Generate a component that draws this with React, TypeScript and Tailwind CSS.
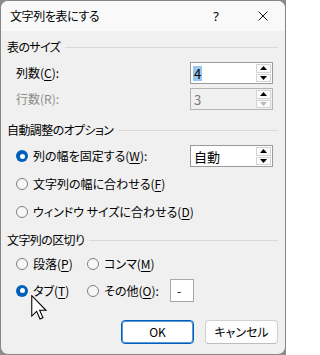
import React from "react";

const font = { fontFamily: '"Noto Sans CJK JP", "Noto Sans", sans-serif', fontFeatureSettings: '"palt"' } as React.CSSProperties;

function U({ c }: { c: string }) {
  return <span className="underline underline-offset-[2px] decoration-[1px]">{c}</span>;
}

function GroupHeader({ label }: { label: string }) {
  return (
    <div className="flex items-center h-[18px] pl-[6px] pr-[7px]">
      <span className="text-[12px] leading-[18px] text-[#000] tracking-[-0.6px]">{label}</span>
      <div className="flex-1 h-px bg-[#d9d9d9] ml-[5px] mt-[1px]" />
    </div>
  );
}

function Tri({ up, dim }: { up?: boolean; dim?: boolean }) {
  return (
    <svg width="7" height="4" viewBox="0 0 7 4">
      {up ? (
        <polygon points="0,4 7,4 3.5,0" fill={dim ? "#b0b0b0" : "#000"} />
      ) : (
        <polygon points="0,0 7,0 3.5,4" fill={dim ? "#b8b8b8" : "#000"} />
      )}
    </svg>
  );
}

function SpinBox({ value, disabled, selected }: { value: string; disabled?: boolean; selected?: boolean }) {
  return (
    <div
      className={`w-[83px] h-[22px] border flex items-stretch ${
        disabled ? "border-[#b4b4b4] bg-[#f0f0f0]" : "border-[#9a9a9a] bg-white"
      }`}
    >
      <div className="flex-1 flex items-center pl-[2px]">
        <span
          className={`text-[13px] leading-[15px] px-px ${
            selected ? "bg-[#99c6ee] text-[#000]" : disabled ? "text-[#7a7a7a]" : "text-[#000]"
          }`}
        >
          {value}
        </span>
      </div>
      <div className="w-[16px] flex flex-col gap-[1px] py-[1px] pr-[1px]">
        <div className="flex-1 border border-[#d4d4d4] bg-[#fbfbfb] flex items-center justify-center">
          <Tri up />
        </div>
        <div className="flex-1 border border-[#d4d4d4] bg-[#fbfbfb] flex items-center justify-center">
          <Tri dim={disabled} />
        </div>
      </div>
    </div>
  );
}

function Radio({ checked }: { checked?: boolean }) {
  return checked ? (
    <div className="w-[12px] h-[12px] rounded-full bg-[#005fb8] flex items-center justify-center shrink-0">
      <div className="w-[5px] h-[5px] rounded-full bg-white" />
    </div>
  ) : (
    <div className="w-[12px] h-[12px] rounded-full border border-[#7f7f7f] bg-[#f7f7f7] shrink-0" />
  );
}

function RadioLabel({ checked, children }: { checked?: boolean; children: React.ReactNode }) {
  return (
    <div className="flex items-center">
      <Radio checked={checked} />
      <span className="ml-[1px] text-[12px] leading-[18px] text-[#000] whitespace-nowrap pl-[4px]">{children}</span>
    </div>
  );
}

export default function App() {
  return (
    <div className="relative w-[286px] h-[355px] bg-[#8c8c8c]" style={font}>
      <div className="w-full h-full rounded-[8px] border border-[#858585] overflow-hidden flex flex-col bg-[#f0f0f0]">
        {/* Title bar */}
        <div className="h-[30px] bg-[#f9f9f9] flex items-center pl-[9px] shrink-0">
          <span className="text-[12px] leading-[18px] text-[#000] tracking-[-0.4px]">文字列を表にする</span>
          <div className="flex-1" />
          <span className="text-[13px] leading-[18px] text-[#000] mr-[39px]" style={{ fontFamily: '"Noto Sans", sans-serif' }}>?</span>
          <svg width="10" height="10" viewBox="0 0 10 10" className="mr-[17px]">
            <path d="M0.5 0.5 L9.5 9.5 M9.5 0.5 L0.5 9.5" stroke="#1a1a1a" strokeWidth="1" />
          </svg>
        </div>

        {/* Body */}
        <div className="flex flex-col pt-[7px]">
          <GroupHeader label="表のサイズ" />
          <div className="flex items-center justify-between pl-[15px] pr-[12px] mt-[6px]">
            <span className="text-[12px] leading-[18px] text-[#000]">
              列数(<U c="C" />):
            </span>
            <SpinBox value="4" selected />
          </div>
          <div className="flex items-center justify-between pl-[15px] pr-[12px] mt-[4px]">
            <span className="text-[12px] leading-[18px] text-[#8c8c8c]">行数(R):</span>
            <SpinBox value="3" disabled />
          </div>

          <div className="mt-[11px]">
            <GroupHeader label="自動調整のオプション" />
          </div>
          <div className="flex items-center justify-between pl-[15px] pr-[12px] mt-[6px] h-[22px]">
            <RadioLabel checked>
              列の幅を固定する(<U c="W" />):
            </RadioLabel>
            <SpinBox value="自動" />
          </div>
          <div className="flex items-center pl-[15px] mt-[6px] h-[22px]">
            <RadioLabel>
              文字列の幅に合わせる(<U c="F" />)
            </RadioLabel>
          </div>
          <div className="flex items-center pl-[15px] mt-[6px] h-[22px]">
            <RadioLabel>
              ウィンドウ サイズに合わせる(<U c="D" />)
            </RadioLabel>
          </div>

          <div className="mt-[8px]">
            <GroupHeader label="文字列の区切り" />
          </div>
          <div className="flex items-center pl-[15px] mt-[4px] h-[22px]">
            <div className="w-[71px]">
              <RadioLabel>
                段落(<U c="P" />)
              </RadioLabel>
            </div>
            <RadioLabel>
              コンマ(<U c="M" />)
            </RadioLabel>
          </div>
          <div className="flex items-center pl-[15px] mt-[4px] h-[23px]">
            <div className="w-[71px]">
              <RadioLabel checked>
                タブ(<U c="T" />)
              </RadioLabel>
            </div>
            <div className="w-[83px]">
              <RadioLabel>
                その他(<U c="O" />):
              </RadioLabel>
            </div>
            <div className="w-[24px] h-[23px] border border-[#a8a8a8] bg-white flex items-center pl-[6px]">
              <span className="text-[12px] leading-[14px] text-[#000]">-</span>
            </div>
          </div>

          <div className="flex justify-end gap-[11px] pr-[7px] mt-[18px]">
            <div className="w-[73px] h-[24px] rounded-[4px] border border-[#005fb8] shadow-[inset_0_0_0_1px_#5a98dc] bg-white flex items-center justify-center">
              <span className="text-[12px] leading-[18px] text-[#000]">OK</span>
            </div>
            <div className="w-[73px] h-[24px] rounded-[4px] border border-[#d0d0d0] border-b-[#bdbdbd] bg-[#fdfdfd] flex items-center justify-center">
              <span className="text-[12px] leading-[18px] text-[#000]">キャンセル</span>
            </div>
          </div>
        </div>
      </div>

      {/* Mouse cursor */}
      <svg width="16" height="25" viewBox="0 0 12 19" className="absolute left-[31px] top-[295px]">
        <path d="M0.5 0.5 L0.5 16 L4.2 12.4 L6.8 18.3 L9 17.3 L6.5 11.6 L11.3 11.6 Z" fill="#fff" stroke="#000" strokeWidth="0.8" strokeLinejoin="miter" />
      </svg>
    </div>
  );
}
